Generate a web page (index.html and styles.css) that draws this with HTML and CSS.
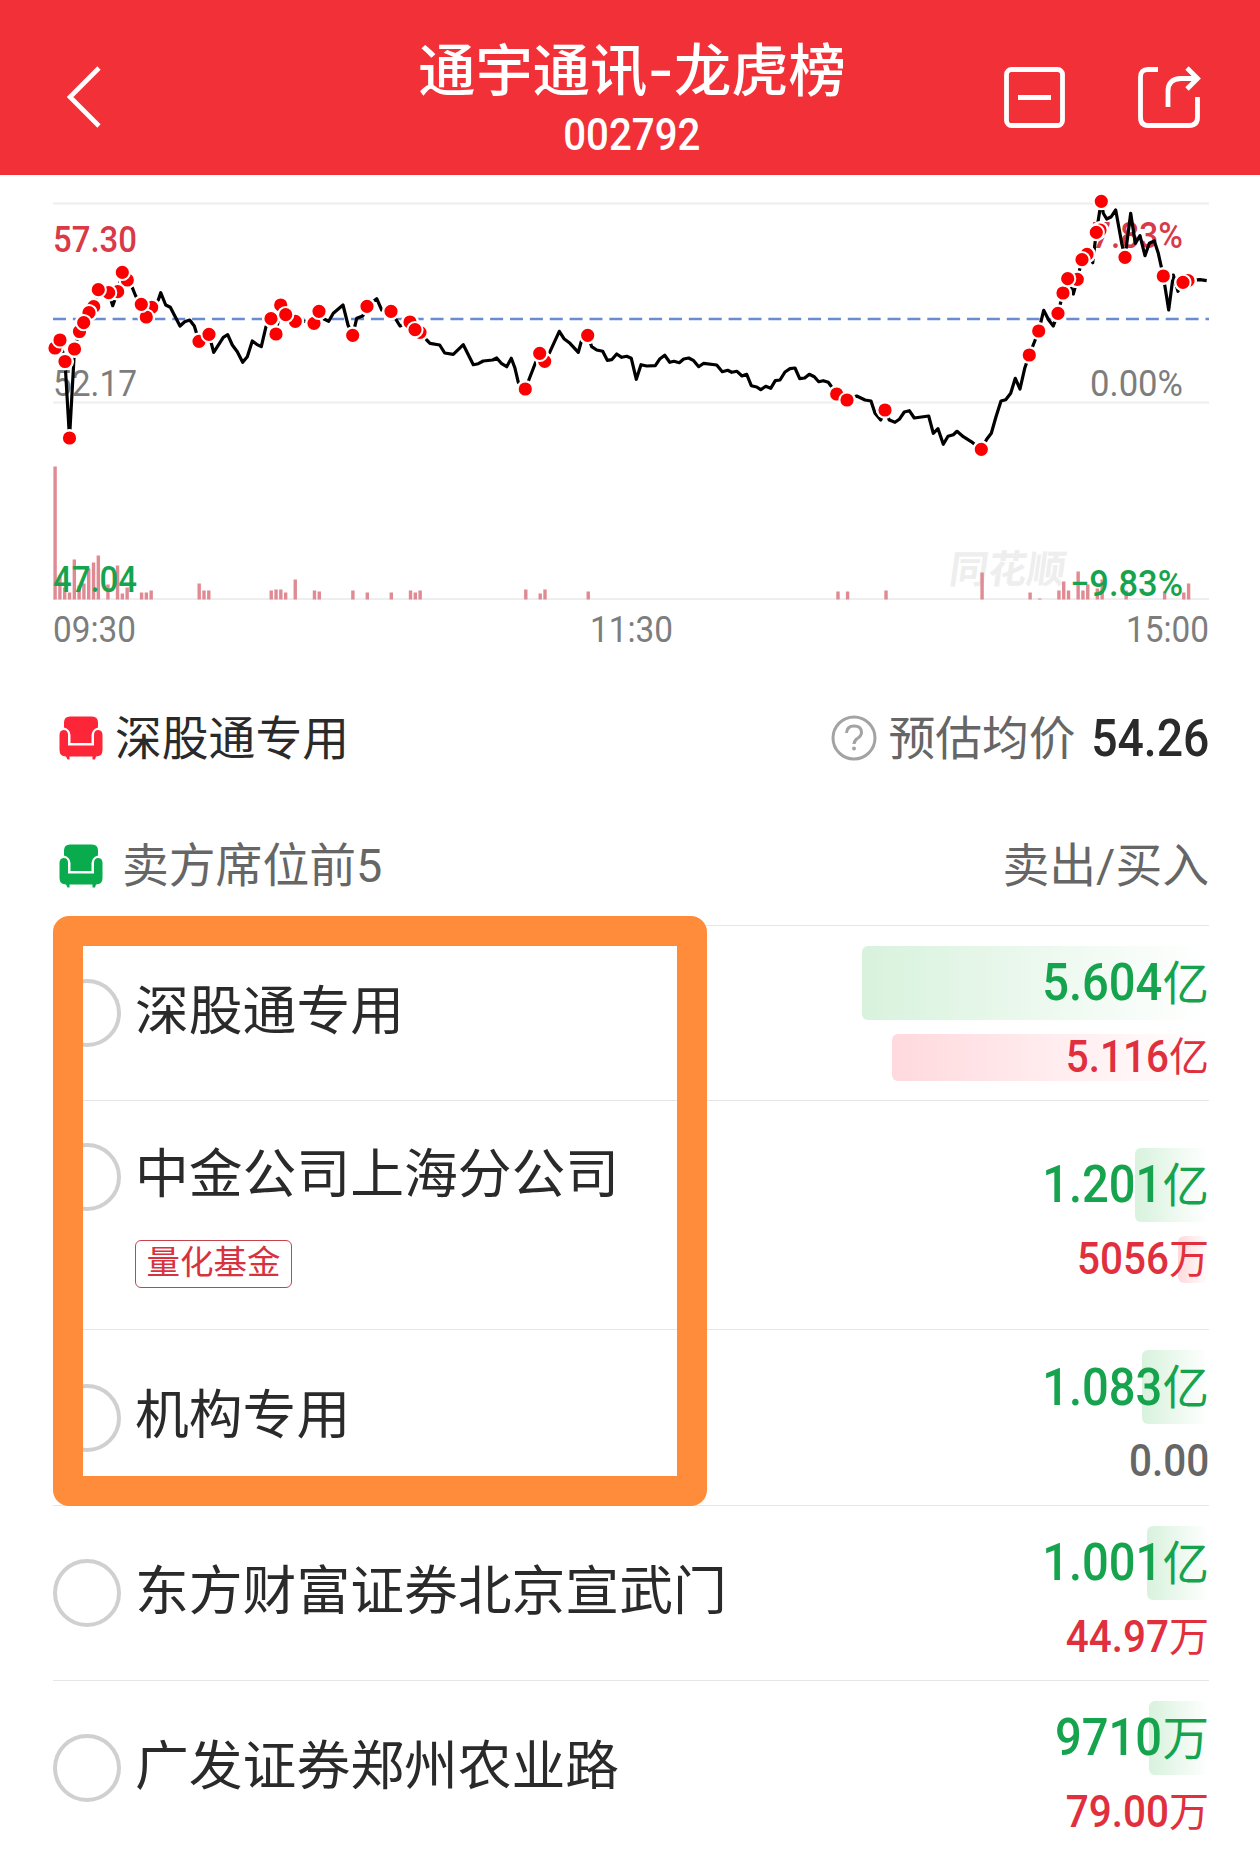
FILE: index.html
```html
<!DOCTYPE html>
<html lang="zh-CN">
<head>
    <meta charset="UTF-8">
    <meta name="viewport" content="width=device-width, initial-scale=1.0">
    <title>通宇通讯-龙虎榜</title>
    <link rel="stylesheet" href="styles.css">
</head>
<body>
    <header class="header">
        <svg class="icon-back" width="40" height="64" viewBox="0 0 40 64" fill="none" stroke="#fff" stroke-width="4.6">
            <path d="M34 3 L5 32 L34 61"/>
        </svg>
        <div class="header-title">
            <h1>通宇通讯<span class="dash">-</span>龙虎榜</h1>
            <div class="code">002792</div>
        </div>
        <div class="header-actions">
            <svg width="64" height="64" viewBox="0 0 64 64" fill="none" stroke="#fff" stroke-width="4.8">
                <rect x="4.500" y="4.500" width="56" height="56" rx="5"/>
                <path d="M16 32.500 H49"/>
            </svg>
            <svg width="66" height="64" viewBox="0 0 66 64" fill="none" stroke="#fff" stroke-width="4.800">
                <path d="M22 4.500 H12 Q4.500 4.500 4.500 12 V52 Q4.500 60.500 12 60.500 H53 Q61.500 60.500 61.500 52 V32"/>
                <path d="M32 42 V26 Q32 13.500 45 13.500 H61"/>
                <path d="M51 3 L61.500 13.500 L51 24"/>
            </svg>
        </div>
    </header>

    <svg class="chart" width="1260" height="485" viewBox="0 175 1260 485">
        <g stroke="#eeeeee" stroke-width="2">
            <path d="M53 203.5 H1209"/>
            <path d="M53 402.5 H1209"/>
            <path d="M53 599 H1209"/>
        </g>
        <path d="M53 319 H1209" stroke="#6a8bd0" stroke-width="2.4" stroke-dasharray="13 6.87"/>
        <text class="watermark" transform="translate(948 583) skewX(-8)" textLength="116">同花顺</text>
        <g id="volume"></g>
        <g class="axis">
            <text class="up" x="53" y="252" textLength="84" lengthAdjust="spacingAndGlyphs">57.30</text>
            <text class="flat" x="53" y="396" textLength="84" lengthAdjust="spacingAndGlyphs">52.17</text>
            <text class="down" x="53" y="592" textLength="84" lengthAdjust="spacingAndGlyphs">47.04</text>
            <text class="up" x="1092" y="248" textLength="91" lengthAdjust="spacingAndGlyphs">7.83%</text>
            <text class="flat" x="1090" y="396" textLength="93" lengthAdjust="spacingAndGlyphs">0.00%</text>
            <text class="down" x="1070" y="596" textLength="113" lengthAdjust="spacingAndGlyphs">−9.83%</text>
            <text class="flat" x="53" y="642" textLength="83" lengthAdjust="spacingAndGlyphs">09:30</text>
            <text class="flat" x="590" y="642" textLength="83" lengthAdjust="spacingAndGlyphs">11:30</text>
            <text class="flat" x="1126" y="642" textLength="83" lengthAdjust="spacingAndGlyphs">15:00</text>
        </g>
        <polyline id="price" fill="none" stroke="#000" stroke-width="3.2" stroke-linejoin="round"/>
        <g id="dots"></g>
    </svg>

    <main class="content">
        <div class="summary">
            <div class="summary-left">
                <svg class="sofa sofa-red" width="44" height="44" viewBox="0 0 44 44"><use href="#sofa"/></svg>
                <span class="summary-name">深股通专用</span>
            </div>
            <div class="summary-right">
                <svg width="46" height="46" viewBox="0 0 46 46" fill="none" stroke="#a3a3a3" stroke-width="3">
                    <circle cx="23" cy="23" r="21"/>
                    <path d="M15.5 18 Q16 11 23 11 Q30.500 11 30.500 17.500 Q30.500 20.500 27 23 Q23 25.500 23 29"/>
                    <circle cx="23" cy="33.500" r="2" fill="#a3a3a3" stroke="none"/>
                </svg>
                <span class="summary-label">预估均价</span>
                <span class="summary-price">54.26</span>
            </div>
        </div>

        <div class="list-head">
            <div class="list-title">
                <svg class="sofa sofa-green" width="44" height="44" viewBox="0 0 44 44"><use href="#sofa"/></svg>
                <span>卖方席位前5</span>
            </div>
            <span>卖出/买入</span>
        </div>

        <div class="seats">
            <div class="seat">
                <div class="seat-info">
                    <div class="seat-line"><i class="radio"></i><span class="seat-name">深股通专用</span></div>
                </div>
                <div class="amounts">
                    <div class="sell"><i class="bar" style="width:347px"></i><b>5.604</b><span>亿</span></div>
                    <div class="buy"><i class="bar" style="width:317px"></i><b>5.116</b><span>亿</span></div>
                </div>
            </div>
            <div class="seat seat-tall">
                <div class="seat-info">
                    <div class="seat-line"><i class="radio"></i><span class="seat-name">中金公司上海分公司</span></div>
                    <div class="tag">量化基金</div>
                </div>
                <div class="amounts">
                    <div class="sell"><i class="bar" style="width:74px"></i><b>1.201</b><span>亿</span></div>
                    <div class="buy"><i class="bar" style="width:31px"></i><b>5056</b><span>万</span></div>
                </div>
            </div>
            <div class="seat">
                <div class="seat-info">
                    <div class="seat-line"><i class="radio"></i><span class="seat-name">机构专用</span></div>
                </div>
                <div class="amounts">
                    <div class="sell"><i class="bar" style="width:67px"></i><b>1.083</b><span>亿</span></div>
                    <div class="buy zero"><b>0.00</b></div>
                </div>
            </div>
            <div class="seat">
                <div class="seat-info">
                    <div class="seat-line"><i class="radio"></i><span class="seat-name">东方财富证券北京宣武门</span></div>
                </div>
                <div class="amounts">
                    <div class="sell"><i class="bar" style="width:62px"></i><b>1.001</b><span>亿</span></div>
                    <div class="buy"><b>44.97</b><span>万</span></div>
                </div>
            </div>
            <div class="seat">
                <div class="seat-info">
                    <div class="seat-line"><i class="radio"></i><span class="seat-name">广发证券郑州农业路</span></div>
                </div>
                <div class="amounts">
                    <div class="sell"><i class="bar" style="width:60px"></i><b>9710</b><span>万</span></div>
                    <div class="buy"><b>79.00</b><span>万</span></div>
                </div>
            </div>
            <!-- 前三席位标注框 -->
            <div class="highlight"></div>
        </div>
    </main>

    <svg class="defs" width="0" height="0">
        <symbol id="sofa" viewBox="0 0 44 44">
            <path d="M11 0.500 H33 Q39 0.500 39 6.500 V11.500 Q33 13 32.500 19 V27 H11.500 V19 Q11 13 5 11.500 V6.500 Q5 0.500 11 0.500 Z"/>
            <path d="M4.500 14 Q9 14 9 19 V29.500 H35 V19 Q35 14 39.500 14 Q43.500 14.500 43.500 19 V34 Q43.500 40.500 37 40.500 L36 43.500 H33.500 V40.500 H10.500 V43.500 H8.500 L7 40.500 Q0.500 40.500 0.500 34 V19 Q0.500 14.500 4.500 14 Z"/>
        </symbol>
    </svg>

    <script>
        // 分时价格线
        const price = [
            [55,348],[60,340],[65,361.5],[69.5,438],[74.5,349],[79.5,331.5],[83.7,322.7],[89,312.7],[93.7,306.7],[98.3,289.7],
            [108.7,292.7],[112.7,305.7],[117.7,291.7],[122.3,272.3],[127.3,280],[132.3,287.7],[135.7,296],[141.3,304.3],[146.3,317],[151.7,307.3],
            [158.3,300],[160.7,292.7],[165.7,305],[170.3,307.3],[180,326],[184.7,321.7],[189.7,320],[194.3,326],[199,341.3],[209,334.3],
            [213.7,352.3],[223.3,337.3],[227.7,334.7],[232.3,345],[237.3,351.7],[242.7,362.3],[247.3,356.7],[252.3,341],[256.7,344.3],[261.3,346.7],
            [266,326.7],[271,318.7],[276,334],[280.7,305],[285.7,314.7],[295.3,321.3],[304,321],[314,323.3],[319,311.3],[324,319],
            [328.7,321.3],[333.3,313.3],[343,305],[348,325],[352.7,335.3],[356.7,318.3],[362.7,316],[367,306.3],[376.7,298.7],[381.7,310],
            [391,311.3],[400,326],[410,322],[415,329.7],[420,332.3],[426.7,340],[430,343.3],[439.7,345],[444.7,353],[453.3,354.3],
            [463.3,344.7],[473.3,364.7],[478.3,363.7],[483.3,361],[492.7,360],[496.7,358],[501.7,363.7],[506.7,366.7],[511.3,358.3],[515,368.3],
            [518.3,382.3],[525.3,389],[535,364],[539.7,353.3],[544.7,361.3],[550,351.7],[559.3,331.3],[564,338.7],[570,343.3],[578.3,352.3],
            [581.7,340],[587.7,335.3],[591.7,346.7],[596.7,350],[602.7,351.3],[607.3,360.3],[611.7,359.7],[616.7,354],[621.7,357.3],[626.7,356.3],
            [631.3,358.3],[636.3,379.3],[641,364.7],[646.7,366],[655.3,365.7],[660,358.7],[664.7,355.3],[669.7,362.3],[674,361.3],[679.3,362.7],
            [683.7,359],[688.7,358],[693.7,360.7],[698.7,366.7],[703.7,363.3],[716.7,365],[722.3,371.7],[727.7,370.3],[731.7,372.3],[737,371.3],
            [742,376],[746.7,374.3],[751.3,385.7],[756.7,387],[760.7,389.7],[765.7,386.3],[770.7,388.3],[775.3,380.7],[780,380],[785,372],
            [790,368.7],[795,368],[799.7,378.7],[804.7,378],[809.3,374.3],[814.3,376.7],[818.7,381.7],[823.3,380.7],[828.3,382.3],[831,386],
            [837.3,393.7],[847,400],[856.7,396],[865,400],[871,401],[875,413.3],[880.7,420],[885,410],[889.3,420],[895,422.3],
            [899.3,419.3],[904.3,412],[909.3,410.7],[914.3,418],[928.7,416],[933.3,433.3],[938,428.7],[943.3,444.3],[948,436.3],[953.3,434.7],
            [957,431.3],[963.3,436.7],[972.7,442.7],[981.3,449.3],[986.7,439.3],[991.3,433.3],[996,416.7],[1001,401],[1005.7,399.7],[1010.7,393.3],
            [1015.3,378.3],[1020,389],[1024.7,368.3],[1029.3,355],[1038.7,331],[1043.7,310.3],[1048.7,320],[1053.3,326],[1058,313.3],[1063,293],
            [1067.7,278.7],[1073.3,294],[1077.3,279.3],[1082,259.7],[1087,254.3],[1092.7,262.7],[1096.3,232.3],[1101.3,201.3],[1103.3,213.3],[1106.7,219],
            [1111.3,216.7],[1115.7,210],[1121.7,243.3],[1125,257.3],[1130.7,213.3],[1135.3,243.3],[1140,235.7],[1145,255.7],[1149.3,243.3],[1154.3,241],
            [1158.3,253.3],[1163.3,276],[1168.7,310],[1173.3,275],[1178,291.3],[1183,282.3],[1188.3,280.7],[1200,279.7],[1206.7,280.7]
        ];

        // 大单成交点
        const dots = [
            [127.3,280],[117.7,291.7],[108.7,292.7],[55,348],[93.7,306.7],[79.5,331.5],[151.7,307.3],[199,341.3],[280.7,305],[295.3,321.3],
            [314,323.3],[410,322],[420,332.3],[544.7,361.3],[836.7,394],[1077.3,279.3],[1087,254.3],[1100,230],[1188,280.7],
            [60,340],[65,361.5],[69.5,438],[74.5,349],[89,312.7],[83.7,322.7],[98.3,289.7],[122.3,272.3],[146.3,317],[141.3,304.3],
            [209,334.3],[271,318.7],[276,334],[285.7,314.7],[319,311.3],[352.7,335.3],[367,306.3],[391,311.3],[415,329.7],[525.3,389],
            [539.7,353.3],[587.7,335.3],[847,400],[885,410],[981.3,449.3],[1029.3,355],[1038.7,331],[1058,313.3],[1063,293],[1067.7,278.7],
            [1082,259.7],[1096.3,232.3],[1101.3,201.3],[1125,257.3],[1163.3,276],[1183,282.3]
        ];

        // 成交量 [分钟, 高度]
        const volume = [
            [0,133],[1,24],[2,12],[3,7],[4,40],[5,14],[6,16],[7,31],[8,37],[9,44],[11,15],[13,34],[14,6],[15,12],
            [18,7],[19,7],[20,9],[30,16],[31,9],[32,9],[45,9],[46,10],[47,10],[48,7],[50,20],[54,9],[55,8],[62,9],[65,7],
            [70,7],[74,9],[75,7],[76,9],[98,10],[101,6],[102,10],[111,8],[163,8],[165,8],[173,9],[193,27],[203,7],[205,1],
            [209,9],[210,18],[211,9],[213,28],[214,9],[215,15],[217,11],[218,20],[223,9],[231,8],[235,7],[236,16]
        ];

        document.getElementById('price').setAttribute('points', price.join(' '));

        document.getElementById('dots').innerHTML =
            dots.map(([x, y]) => `<circle cx="${x}" cy="${y}" r="9" fill="#fff"/>`).join('') +
            dots.map(([x, y]) => `<circle cx="${x}" cy="${y}" r="7.6" fill="#fa0000" stroke="#fff" stroke-width="2"/>`).join('');

        document.getElementById('volume').innerHTML = volume.map(([i, h]) =>
            `<rect x="${53.4 + i * 4.803}" y="${599.500 - h}" width="3.4" height="${h}" fill="#e08a93"/>`).join('');
    </script>
</body>
</html>
```
FILE: styles.css
```css
* {
    box-sizing: border-box;
}

body {
    margin: 0;
    width: 1260px;
    height: 1870px;
    overflow: hidden;
    background: #fff;
    color: #2a2a2a;
    font-family: Roboto, "Noto Sans CJK SC", sans-serif;
}

svg {
    display: block;
    flex-shrink: 0;
}

i,
b {
    font-style: normal;
}

.header {
    height: 175px;
    padding: 0 58px 0 65px;
    background: #f13038;
    color: #fff;
    display: grid;
    grid-template-columns: 1fr auto 1fr;
}

.icon-back {
    margin-top: 65px;
}

.header-title {
    margin-left: -3px;
    text-align: center;
}

.header h1 {
    margin: 36px 0 0;
    font-size: 57.3px;
    line-height: 68px;
    font-weight: 500;
    white-space: nowrap;
}

.header .dash {
    font-family: Inter, sans-serif;
}

.code {
    margin-top: 3px;
    font-size: 43.5px;
    line-height: 54px;
    font-weight: 500;
    transform: scaleX(0.925);
}

.header-actions {
    margin-top: 65px;
    display: flex;
    justify-content: flex-end;
    gap: 70px;
}

.axis text {
    font-size: 36px;
    font-weight: 500;
}

.axis .up {
    fill: #d83a48;
}

.axis .flat {
    fill: #7d7d7d;
    font-weight: 400;
}

.axis .down {
    fill: #16a34d;
}

.watermark {
    font-family: "Noto Sans CJK SC", sans-serif;
    font-size: 38.5px;
    font-weight: 700;
    fill: #eeeeee;
}

.content {
    padding: 0 51px 0 53px;
}

.summary {
    height: 156px;
    display: flex;
    align-items: center;
    justify-content: space-between;
    font-size: 46.8px;
}

.summary-left,
.summary-right,
.list-title {
    display: flex;
    align-items: center;
}

.sofa {
    margin-left: 6px;
}

.sofa-red {
    fill: #fd2638;
}

.sofa-green {
    fill: #0aab4c;
}

.summary-name {
    margin: -8px 0 0 12px;
}

.summary-label {
    margin: -8px 0 0 11px;
    color: #666;
}

.summary-price {
    margin-left: 2px;
    font-size: 51.500px;
    font-weight: 500;
    transform: scaleX(0.9);
    transform-origin: right;
}

.list-head {
    height: 109px;
    padding-bottom: 9px;
    display: flex;
    align-items: center;
    justify-content: space-between;
    font-size: 46.8px;
    color: #666;
}

.list-head span {
    margin-top: -9px;
}

.list-title span {
    margin-left: 19px;
}

.seats {
    position: relative;
}

.seat {
    height: 175px;
    border-top: 1px solid #e6e6e6;
    display: flex;
    align-items: center;
    justify-content: space-between;
}

.seat-tall {
    height: 229px;
}

.seat-tall + .seat {
    height: 176px;
}

.seat-line {
    display: flex;
    align-items: center;
}

.radio {
    width: 68px;
    height: 68px;
    border: 4px solid #d0d0d0;
    border-radius: 50%;
}

.seat-name {
    margin: -3px 0 0 14px;
    font-size: 53.8px;
    line-height: 60px;
    white-space: nowrap;
}

.tag {
    width: 157px;
    height: 48px;
    margin: 29px 0 0 82px;
    border: 1.500px solid #c4434f;
    border-radius: 6px;
    color: #d6333f;
    font-size: 33.500px;
    line-height: 44px;
    text-align: center;
}

.amounts {
    display: flex;
    flex-direction: column;
    gap: 14px;
}

.sell,
.buy {
    position: relative;
    display: flex;
    align-items: center;
    justify-content: flex-end;
}

.sell {
    height: 74px;
    color: #16a34d;
    font-size: 46.500px;
}

.buy {
    height: 47px;
    color: #e0303e;
    font-size: 40px;
}

.sell b {
    font-size: 51.500px;
    font-weight: 500;
    transform: scaleX(0.915);
    transform-origin: right;
}

.buy b {
    font-size: 43.500px;
    font-weight: 500;
    transform: scaleX(0.93);
    transform-origin: right;
}

.sell b,
.buy b,
.sell span,
.buy span {
    position: relative;
}

.sell span,
.buy span {
    margin-top: -7px;
}

.zero {
    color: #666;
}

/* 金额背景条 */
.bar {
    position: absolute;
    top: 0;
    right: 0;
    height: 100%;
    border-radius: 6px;
}

.sell .bar {
    background: linear-gradient(90deg, #d8f2dd, #fff);
}

.buy .bar {
    background: linear-gradient(90deg, #ffd9dd, #fff);
}

.highlight {
    position: absolute;
    top: -9px;
    left: 0;
    width: 654px;
    height: 590px;
    border: 30px solid #ff8c3b;
    border-radius: 16px;
}

.defs {
    position: absolute;
}
```
